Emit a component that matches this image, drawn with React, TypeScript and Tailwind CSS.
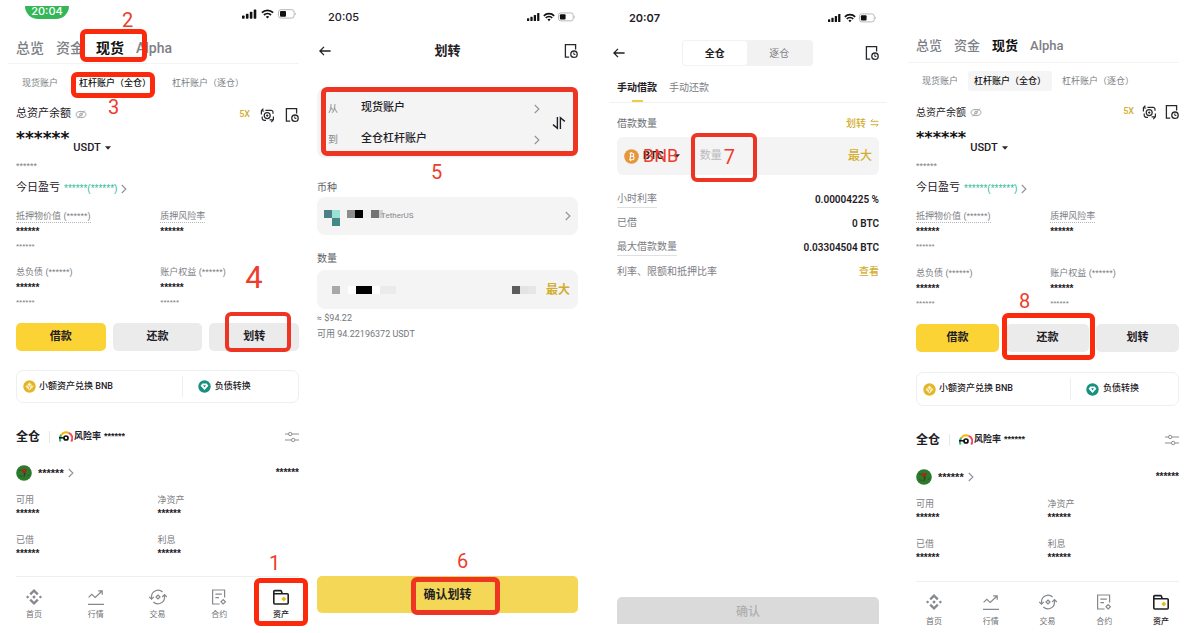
import React from "react";
import clsx from "clsx";

const INK = "text-[#1e2026]";
const MUTED = "text-[#7d8085]";
const STARS = "font-['Liberation_Sans',sans-serif]";
const RED = "border-[#ee3524]";
const BRIGHT_RED = "border-[#fb2a0c]";

type MarkProps = { box?: string; label: string; at: string; size?: string };

/* Red tutorial frame and step number laid over the control it points at. */
function Mark({ box, label, at, size = "text-[20px]" }: MarkProps) {
  return (
    <>
      {box && <span className={clsx("pointer-events-none absolute z-20 rounded-[6px]", box)} />}
      <span
        className={clsx(
          "pointer-events-none absolute z-20 font-normal leading-none text-[#ee3d2c]",
          size,
          at,
        )}
      >
        {label}
      </span>
    </>
  );
}

function StatusIcons({ compact }: { compact?: boolean }) {
  return (
    <div className={clsx("flex items-center", compact ? "gap-[3px]" : "gap-1")}>
      <svg className={compact ? "w-[13px]" : "w-[15px]"} height="10" viewBox="0 0 15 10" fill="#111">
        <rect x="0" y="6.5" width="2.6" height="3.2" rx="0.7" />
        <rect x="3.9" y="4.8" width="2.6" height="4.9" rx="0.7" />
        <rect x="7.8" y="2.7" width="2.6" height="7" rx="0.7" />
        <rect x="11.7" y="0.4" width="2.6" height="9.3" rx="0.7" />
      </svg>
      <svg className={compact ? "w-3" : "w-[13px]"} height="10" viewBox="0 0 13 10" fill="none" stroke="#111" strokeWidth="1.8">
        <path d="M0.9 3.7a8 8 0 0 1 11.2 0" />
        <path d="M3 6a5 5 0 0 1 7 0" />
        <path d="M6.5 9.6 4.8 7.8a2.5 2.5 0 0 1 3.4 0z" fill="#111" stroke="none" />
      </svg>
      <svg className={compact ? "w-[18px]" : "w-[19px]"} height="10" viewBox="0 0 19 10">
        <rect x="0.5" y="0.7" width="15.6" height="8.4" rx="2.4" fill="none" stroke="#b5b5b5" />
        <rect x="2" y="2.1" width="6" height="5.6" rx="1" fill="#111" />
        <path d="M17.2 3.5v2.8c1-.4 1-2.4 0-2.8z" fill="#b5b5b5" />
      </svg>
    </div>
  );
}

function Chevron({ className }: { className?: string }) {
  return (
    <svg width="6" height="10" viewBox="0 0 6 10" fill="none" stroke="#8f9296" strokeWidth="1.1" className={className}>
      <path d="M0.8 1 4.9 5 0.8 9" />
    </svg>
  );
}

function HistoryIcon() {
  return (
    <svg width="14" height="16" viewBox="0 0 14 16" fill="none" stroke="#26282c" strokeWidth="1.3">
      <path d="M5.2 14.2H1.4V1.6h10.2v5" />
      <circle cx="10" cy="11.2" r="3.2" />
      <path d="M9.8 9.4v2h1.6" strokeWidth="1" />
    </svg>
  );
}

function ConvertIcon() {
  return (
    <svg width="15" height="16" viewBox="0 0 15 16" fill="none" stroke="#26282c" strokeWidth="1.2">
      <circle cx="7.2" cy="8.6" r="3" />
      <path d="m7.2 7.2 1.4 1.4-1.4 1.4-1.4-1.4z" fill="#26282c" stroke="none" />
      <path d="M1.4 7.6V3.4M1.4 4h2.8M3.4 1.6 1.2 4M5.4 3.4h5.8a1.8 1.8 0 0 1 1.8 1.8v1.6" />
      <path d="M2.2 9.4v1.8a2.2 2.2 0 0 0 2.2 2.2H6M9.6 12.9h4M13.4 9.6v3.3M11.2 15.1l2.2-2.2" />
    </svg>
  );
}

function EyeOffIcon() {
  return (
    <svg width="12" height="9" viewBox="0 0 12 9" fill="none" stroke="#9b9da1" strokeWidth="0.9">
      <ellipse cx="6" cy="4.5" rx="4.9" ry="3.1" />
      <circle cx="6" cy="4.5" r="1.4" />
      <path d="M2.2 8.5 10 .6" />
    </svg>
  );
}

function Caret() {
  return (
    <svg width="6" height="4" viewBox="0 0 6 4" fill="#26282c">
      <path d="M0 0.3h6L3 3.8z" />
    </svg>
  );
}

function BackIcon() {
  return (
    <svg width="12" height="10" viewBox="0 0 12 10" fill="none" stroke="#1e2026" strokeWidth="1.3">
      <path d="M11.6 5H1M5 0.9 0.9 5 5 9.1" />
    </svg>
  );
}

function GaugeIcon() {
  return (
    <svg width="14" height="12" viewBox="0 0 14 12" fill="none" strokeWidth="2">
      <path d="M1.6 10.5A5.6 5.6 0 0 1 2.4 4" stroke="#2eb67d" />
      <path d="M2.4 4A5.6 5.6 0 0 1 9.6 1.9" stroke="#f5b800" />
      <path d="M9.6 1.9a5.6 5.6 0 0 1 2.6 8.6" stroke="#ef4a5f" />
      <path d="M0 6.8h5" stroke="#111" strokeWidth="1.5" />
      <circle cx="7" cy="7" r="2" stroke="#111" strokeWidth="1.7" />
    </svg>
  );
}

function SlidersIcon() {
  return (
    <svg width="14" height="12" viewBox="0 0 14 12" fill="none" stroke="#8b8e93">
      <path d="M0 3h3.4M7 3h7M0 9h6.4M10 9h4" />
      <circle cx="5.2" cy="3" r="1.7" />
      <circle cx="8.2" cy="9" r="1.7" />
    </svg>
  );
}

function SmallBalanceIcon() {
  return (
    <svg width="13" height="13" viewBox="0 0 13 13">
      <circle cx="6.5" cy="6.5" r="6.2" fill="#e3b62a" />
      <path d="m6.5 2.6 3.9 3.9-3.9 3.9-3.9-3.9z" fill="#fbeec2" />
      <path d="m4.3 5 2.2 2.1L8.7 5M6.5 7.1v2" stroke="#e3b62a" fill="none" strokeWidth="0.9" />
    </svg>
  );
}

function DebtIcon() {
  return (
    <svg width="13" height="13" viewBox="0 0 13 13">
      <circle cx="6.5" cy="6.5" r="6.2" fill="#17907f" />
      <path d="M4.4 3.6h4.2l1.8 2.1-3.9 4.2-3.9-4.2z" fill="#fff" />
      <path d="M5 5.2h3L6.5 7.6z" fill="#17907f" />
    </svg>
  );
}

function CoinIcon() {
  return (
    <svg width="16" height="16" viewBox="0 0 16 16">
      <circle cx="8" cy="8" r="7.8" fill="#2c7a2c" />
      <path d="M3 5.5c1.6-1 2 .8 3.4.2M3.4 10.5c1 .9 2.4.4 3 1.4M11.6 11c.8-1 1.6-.8 2-1.8" stroke="#1f5a20" fill="none" />
      <path d="M6 4.1c.8-.6 1.4.2 2 .2s1.6-.8 2.4 0c.6.8.2 1.8-.4 2.6-.6.9-1.2.8-2 .8s-1.8-.4-2.2-1.4c-.2-.8-.2-1.8.2-2.2z" fill="#a8281f" />
      <path d="M8.2 7.4c.4 1.6.2 3-.2 4.8M8.3 9.6l1.6-1" stroke="#4a3018" fill="none" />
    </svg>
  );
}

type NavName = "home" | "market" | "trade" | "futures" | "assets";

function NavIcon({ name }: { name: NavName }) {
  return (
    <svg width="18" height="18" viewBox="0 0 18 18" fill="none" stroke="#85888c" strokeWidth="1.2">
      {name === "home" && (
        <g fill="#85888c" stroke="none">
          <path d="m9 1 4.6 4.6-1.6 1.6-3-3-3 3-1.6-1.6zM9 17l4.6-4.6-1.6-1.6-3 3-3-3-1.6 1.6z" />
          <path d="m9 7.2 1.8 1.8L9 10.8 7.2 9zM2.6 7.4 4.2 9l-1.6 1.6L1 9zM15.4 7.4 17 9l-1.6 1.6L13.8 9z" />
        </g>
      )}
      {name === "market" && (
        <path d="M1 16.3h16M1.6 9.4l3.2-3 3.4 3 6.6-6.2M11.2 2.8h4v4" />
      )}
      {name === "trade" && (
        <>
          <path d="M2.5 11V8.6A6.6 6.6 0 0 1 13.6 4M15.5 7v2.4a6.6 6.6 0 0 1-11.1 4.6" />
          <path d="M0.2 8.8 2.5 11.2l2.3-2.4M13.2 9l2.3-2.4L17.8 9" />
          <path d="m9 7 2 2-2 2-2-2z" />
        </>
      )}
      {name === "futures" && (
        <>
          <path d="M9.6 16H2.6V2h12v7.4M5.4 6.2h6.4M5.4 9.6h3.6" />
          <path d="m13.2 11.6 2.2 2.2-2.2 2.2-2.2-2.2z" />
        </>
      )}
      {name === "assets" && (
        <>
          <path d="M1.8 5.8V3.6a1 1 0 0 1 1-1h5.6a1 1 0 0 1 1 .7l.8 2.5M1.8 5.8h13.4a1 1 0 0 1 1 1V15a1 1 0 0 1-1 1H2.8a1 1 0 0 1-1-1z" stroke="#1e2026" strokeWidth="1.6" />
          <path d="m11.8 8.4 2.5 2.5-2.5 2.5-2.5-2.5z" fill="#e3bd1c" stroke="none" />
        </>
      )}
    </svg>
  );
}

const NAV: { name: NavName; text: string }[] = [
  { name: "home", text: "首页" },
  { name: "market", text: "行情" },
  { name: "trade", text: "交易" },
  { name: "futures", text: "合约" },
  { name: "assets", text: "资产" },
];

function Stat({ label, mask, sub, underline }: { label: string; mask?: boolean; sub?: boolean; underline?: boolean }) {
  return (
    <div>
      <div className={clsx("flex h-4 items-center pt-0.5 text-[9px] leading-[12px]", MUTED)}>
        <span className={clsx(underline && "border-b border-dotted border-[#b5b7ba]")}>
          {label}
          {mask && <span className={STARS}> (******)</span>}
        </span>
      </div>
      <div className={clsx("h-4 pt-0.5 text-[10px] font-bold leading-[14px]", STARS, INK)}>******</div>
      <div className={clsx("h-3.5 pt-0.5 text-[8px] leading-[12px]", STARS, MUTED)}>{sub && "******"}</div>
    </div>
  );
}

function AssetStat({ label }: { label: string }) {
  return (
    <div>
      <div className={clsx("h-3.5 text-[9px] leading-[16px]", MUTED)}>{label}</div>
      <div className={clsx("h-3.5 pt-0.5 text-[10px] font-bold leading-[12px]", STARS, INK)}>******</div>
    </div>
  );
}

const FIRST = {
  shell: "pl-4 pr-px",
  tabs: "h-9 pt-1.5 text-[14px]",
  sub: "h-[38px] gap-[9px]",
  chip: "",
  total: "h-[23px] pt-0.5 text-[11px]",
  tools: "gap-2.5",
  balance: "text-[17px]",
  stats: "gap-y-2.5",
  card: "mt-[19px] h-[33px]",
  coin: "mt-3",
  nav: "mt-4",
  navItem: "gap-0.5",
};

const REPAY: typeof FIRST = {
  shell: "pl-4 pr-[21px]",
  tabs: "h-[35px] pt-0.5 text-[13px]",
  sub: "h-9 gap-1",
  chip: "bg-[#f5f5f5]",
  total: "h-[26px] text-[10px]",
  tools: "gap-2",
  balance: "text-[16px]",
  stats: "gap-y-[11px]",
  card: "mt-5 h-[34px]",
  coin: "mt-[13px]",
  nav: "mt-[17px]",
  navItem: "gap-1",
};

function Wallet({ first }: { first: boolean }) {
  const s = first ? FIRST : REPAY;
  return (
    <section className={clsx("flex min-w-0 flex-col", s.shell)}>
      <div className="flex h-7 items-center justify-between pl-[9px] pr-0.5">
        {first && (
          <>
            <span className="mt-1.5 flex h-[13px] w-11 items-center justify-center self-start rounded-b-full rounded-t-[4px] bg-[#34b759] pb-0.5 font-['Inter',sans-serif] text-[11px] font-medium leading-none text-white">
              20:04
            </span>
            <StatusIcons />
          </>
        )}
      </div>

      <div className={clsx("-ml-2 flex items-center gap-3 border-b border-[#f3f3f3] pl-2 font-medium text-[#7d8085]", s.tabs)}>
        <button type="button">总览</button>
        <button type="button">资金</button>
        <div className="relative flex">
          <button type="button" className="font-bold text-[#111]">现货</button>
          {first && (
            <Mark box={clsx("-left-4 -right-[23px] -top-[9px] -bottom-[3px] border-[5px]", BRIGHT_RED)} label="2" at="left-[26px] -top-7" />
          )}
        </div>
        <button type="button">Alpha</button>
      </div>

      <div className={clsx("flex items-center text-[9px] text-[#7d8085]", s.sub)}>
        <button type="button" className="h-5 whitespace-nowrap px-1.5 pt-0.5">现货账户</button>
        <div className="relative flex">
          <button type="button" className={clsx("h-5 whitespace-nowrap rounded-[3px] px-1.5 pt-0.5 font-medium text-[#111]", s.chip)}>
            杠杆账户（全仓）
          </button>
          {first && (
            <Mark box={clsx("-left-0.5 right-0.5 -top-px -bottom-[5px] border-[5px]", BRIGHT_RED)} label="3" at="left-[35px] top-6" />
          )}
        </div>
        <button type="button" className="h-5 whitespace-nowrap px-1.5 pt-0.5">杠杆账户（逐仓）</button>
      </div>

      <div className={clsx("flex items-center justify-between", s.total, INK)}>
        <div className="flex items-center gap-1">
          <span>总资产余额</span>
          <EyeOffIcon />
        </div>
        <div className={clsx("flex items-center", s.tools)}>
          <span className="text-[9px] font-medium text-[#d3ad2f]">5X</span>
          <button type="button" aria-label="兑换"><ConvertIcon /></button>
          <button type="button" aria-label="历史记录"><HistoryIcon /></button>
        </div>
      </div>

      <div className="flex h-[31px] items-start gap-1">
        <span className={clsx("pt-[3px] font-['DejaVu_Sans',sans-serif] font-bold leading-[20px] text-[#111]", s.balance)}>******</span>
        <button type="button" className={clsx("mt-4 flex items-center gap-1 text-[11px] font-medium leading-[14px]", INK)}>
          USDT <Caret />
        </button>
      </div>

      <div className={clsx("h-[18px] pt-1 text-[9px] leading-[12px]", STARS, MUTED)}>******</div>

      <div className={clsx("flex h-[27px] items-center gap-1 pt-0.5 text-[11px]", INK)}>
        <span>今日盈亏</span>
        <span className={clsx("text-[10px] leading-none text-[#2ebd9b]", STARS)}>******(******)</span>
        <Chevron />
      </div>

      <div className={clsx("mt-1.5 grid grid-cols-[51%_1fr]", s.stats)}>
        <Stat label="抵押物价值" mask sub underline />
        <Stat label="质押风险率" underline />
        <Stat label="总负债" mask sub />
        <Stat label="账户权益" mask sub />
      </div>

      <div className={clsx("mt-3.5 grid grid-cols-3 gap-[7px] text-[11px] font-bold", INK)}>
        <button type="button" className="h-7 rounded-[5px] bg-[#fcd335] pt-px">借款</button>
        <div className="relative grid">
          <button type="button" className="h-7 rounded-[5px] bg-[#ebebeb] pt-px">还款</button>
          {!first && (
            <Mark box={clsx("-left-1 -right-1.5 -top-[11px] -bottom-2 border-[5px]", BRIGHT_RED)} label="8" at="left-[13px] -top-[33px]" />
          )}
        </div>
        <div className="relative grid">
          <button type="button" className="h-7 rounded-[5px] bg-[#ebebeb] pt-px">划转</button>
          {first && (
            <Mark box={clsx("left-4 right-2 -top-[11px] -bottom-px border-[4px]", RED)} label="4" at="left-9 -top-[61px]" size="text-[31px]" />
          )}
        </div>
      </div>

      <div className={clsx("flex items-center rounded-[7px] border border-[#eeeff1] text-[9px] font-medium", INK, s.card)}>
        <button type="button" className="flex w-[59%] items-center gap-[3px] whitespace-nowrap border-r border-[#eeeff1] py-1 pl-1.5">
          <SmallBalanceIcon /> 小额资产兑换 BNB
        </button>
        <button type="button" className="flex items-center gap-1 whitespace-nowrap pl-[15px]">
          <DebtIcon /> 负债转换
        </button>
      </div>

      <div className={clsx("mt-[22px] flex h-6 items-center", INK)}>
        <h2 className="text-[12px] font-bold">全仓</h2>
        <span className="mx-[9px] h-3 w-px bg-[#e6e7e9]" />
        <GaugeIcon />
        <span className="ml-px text-[9px] font-bold">风险率</span>
        <span className={clsx("ml-[3px] text-[9px] font-bold", STARS)}>******</span>
        <button type="button" aria-label="筛选" className="ml-auto"><SlidersIcon /></button>
      </div>

      <div className={clsx("flex h-6 items-center", s.coin, INK)}>
        <CoinIcon />
        <span className={clsx("ml-1.5 text-[11px] font-bold leading-none", STARS)}>******</span>
        <Chevron className="ml-1" />
        <span className={clsx("ml-auto text-[10px] font-bold leading-none", STARS)}>******</span>
      </div>

      <div className="mt-[7px] grid grid-cols-2 gap-y-3">
        <AssetStat label="可用" />
        <AssetStat label="净资产" />
        <AssetStat label="已借" />
        <AssetStat label="利息" />
      </div>

      <nav className={clsx("flex justify-between border-t border-[#eeeff0] px-2.5 pt-[11px]", s.nav)}>
        {NAV.map((item) => (
          <a
            key={item.name}
            href={"#" + item.name}
            className={clsx(
              "relative flex w-4 flex-col items-center whitespace-nowrap text-[8px] leading-[14px]",
              s.navItem,
              item.name === "assets" ? "font-medium text-[#1e2026]" : "text-[#6f7276]",
            )}
          >
            <span className="flex w-[18px]"><NavIcon name={item.name} /></span>
            {item.text}
            {first && item.name === "assets" && (
              <Mark box={clsx("-left-[19px] -right-[19px] -top-2.5 -bottom-1 border-[5px]", BRIGHT_RED)} label="1" at="-left-1 -top-[35px]" />
            )}
          </a>
        ))}
      </nav>
    </section>
  );
}

function Mosaic({ cells }: { cells: string[] }) {
  return (
    <span className="flex">
      {cells.map((c, i) => (
        <span key={i} className={clsx("h-2 w-2", c)} />
      ))}
    </span>
  );
}

function Transfer() {
  return (
    <section className="flex min-w-0 flex-col pb-5 pl-[17px] pr-[22px] text-[#1e2026]">
      <div className="flex h-[34px] items-center justify-between pl-[11px] pr-0.5">
        <span className="font-['Inter',sans-serif] text-[11px] font-medium">20:05</span>
        <StatusIcons compact />
      </div>
      <header className="flex h-[34px] items-center justify-between pl-0.5">
        <button type="button" aria-label="返回"><BackIcon /></button>
        <h1 className="text-[13px] font-bold">划转</h1>
        <button type="button" aria-label="历史记录"><HistoryIcon /></button>
      </header>

      <div className="relative mt-5 flex items-center rounded-[8px] bg-[#f4f4f4] pl-[11px] pr-3">
        <div className="flex-1 py-1">
          {[
            ["从", "现货账户"],
            ["到", "全仓杠杆账户"],
          ].map(([side, account]) => (
            <button key={side} type="button" className="flex h-[31px] w-full items-center pt-0.5 text-left">
              <span className="w-[33px] text-[10px] text-[#85888c]">{side}</span>
              <span className="text-[11px] font-medium">{account}</span>
              <Chevron className="ml-auto" />
            </button>
          ))}
        </div>
        <button type="button" aria-label="互换" className="ml-3">
          <svg width="14" height="14" viewBox="0 0 14 14" fill="none" stroke="#1e2026" strokeWidth="1.4">
            <path d="M5.4 1v11.2L1 8.6M8.4 13V1.8L12.8 5.4" />
          </svg>
        </button>
        <Mark box={clsx("left-1 right-0 -top-px bottom-0.5 border-[5px]", RED)} label="5" at="left-[114px] top-[74px]" />
      </div>

      <h2 className="mt-[22px] text-[10px] leading-[16px] text-[#5c5f64]">币种</h2>
      <button type="button" aria-label="选择币种" className="mt-px flex h-[38px] items-center rounded-[8px] bg-[#f4f4f4] px-[7px] text-left">
        <span className="mt-[3px] flex flex-col">
          <Mosaic cells={["bg-[#4d7f87]", "bg-[#9ce0d8]"]} />
          <Mosaic cells={["bg-[#f4f4f4]", "bg-[#458986]"]} />
        </span>
        <span className="mb-1 ml-[7px] flex items-center">
          <Mosaic cells={["bg-[#8d8d8d]", "bg-[#000000]", "bg-[#efefef]", "bg-[#737373]"]} />
          <span className="h-2 w-1 bg-[#d0d0d0]" />
        </span>
        <span className="-ml-0.5 text-[8px] text-[#85888c]">TetherUS</span>
        <Chevron className="ml-auto" />
      </button>

      <h2 className="mt-4 text-[10px] leading-[16px] text-[#5c5f64]">数量</h2>
      <div className="mt-[3px] flex h-[39px] items-center rounded-[8px] bg-[#f4f4f4] pl-[15px] pr-2">
        <Mosaic cells={["bg-[#a8a8a8]", "bg-[#f4f4f4]", "bg-[#ffffff]", "bg-[#000000]", "bg-[#000000]", "bg-[#ffffff]", "bg-[#ebebeb]", "bg-[#ebebeb]"]} />
        <span className="ml-auto mr-2.5"><Mosaic cells={["bg-[#5c5c5c]", "bg-[#e3e3e3]", "bg-[#e6e6e6]"]} /></span>
        <button type="button" className="text-[12px] font-bold text-[#d3ad2f]">最大</button>
      </div>
      <p className="mt-px text-[9px] leading-[16px] text-[#74777c]">≈ $94.22</p>
      <p className="text-[9px] leading-[16px] text-[#74777c]">可用 94.22196372 USDT</p>

      <div className="relative mt-auto grid">
        <button type="button" className="h-[37px] rounded-[5px] bg-[#f4d756] text-[12px] font-bold text-[#1e2026]">确认划转</button>
        <Mark box={clsx("left-[36%] right-[30%] top-px -bottom-0.5 border-[5px]", RED)} label="6" at="left-[140px] -top-[25px]" />
      </div>
    </section>
  );
}

function Borrow() {
  return (
    <section className="flex min-w-0 flex-col pb-[9px] pl-[17px] pr-[21px] text-[#1e2026]">
      <div className="flex h-9 items-center justify-between pl-3 pr-0.5">
        <span className="font-['Inter',sans-serif] text-[11px] font-semibold">20:07</span>
        <StatusIcons compact />
      </div>
      <header className="-ml-1 flex h-[34px] items-center justify-between">
        <button type="button" aria-label="返回"><BackIcon /></button>
        <div className="ml-1 grid h-[26px] w-[131px] grid-cols-2 rounded-[4px] bg-[#f2f2f2] p-px text-[10px]">
          <button type="button" className="rounded-[3px] bg-white font-bold">全仓</button>
          <button type="button" className="text-[#7d8085]">逐仓</button>
        </div>
        <button type="button" aria-label="历史记录"><HistoryIcon /></button>
      </header>

      <div className="-mx-2 flex h-[33px] items-end gap-3 border-b border-[#f1f1f1] px-2 text-[10px]">
        <button type="button" className="flex flex-col items-center gap-1 font-bold leading-[16px]">
          手动借款
          <span className="h-0.5 w-[11px] bg-[#f0cf3c]" />
        </button>
        <button type="button" className="mb-1.5 leading-[16px] text-[#7d8085]">手动还款</button>
      </div>

      <div className="mt-2.5 flex h-5 items-center justify-between text-[10px]">
        <label htmlFor="borrow-amount" className="text-[#6c6f74]">借款数量</label>
        <button type="button" className="flex items-center gap-1 font-medium text-[#d3ad2f]">
          划转
          <svg width="9" height="8" viewBox="0 0 9 8" fill="none" stroke="#d3ad2f">
            <path d="M8.4 2.3H.8L2.8.4M.6 5.7h7.6l-2 1.9" />
          </svg>
        </button>
      </div>

      <div className="mt-1 flex h-[38px] items-center rounded-[6px] bg-[#f4f4f4] px-[7px]">
        <button type="button" className="flex items-center text-[11px] font-bold">
          <svg width="15" height="15" viewBox="0 0 15 15">
            <circle cx="7.5" cy="7.5" r="7.3" fill="#e8963a" />
            <path d="M5.6 4.2h2.6c2.2 0 2 2.8.2 3.1 2.4.1 2.2 3.5-.2 3.5H5.2M6.7 4.2 6 10.8M6.2 7.3h2.2M7.2 2.9v1.2M6.6 10.8V12" fill="none" stroke="#fff" strokeWidth="1.1" />
          </svg>
          <span className="relative ml-1 mr-2.5">
            BTC
            <Mark label="BNB" at="left-0 -top-px" size="text-[18px]" />
          </span>
          <Caret />
        </button>
        <div className="relative ml-5 flex min-w-0 flex-1 items-center">
          <input id="borrow-amount" type="text" placeholder="数量" className="w-full bg-transparent text-[11px] text-[#1e2026] outline-none placeholder:text-[#b9bbbe]" />
          <Mark box={clsx("-left-[9px] -top-[15px] h-[49px] w-[66px] border-[4px]", RED)} label="7" at="left-6 -top-px" />
        </div>
        <button type="button" className="whitespace-nowrap text-[12px] font-medium text-[#d3ad2f]">最大</button>
      </div>

      <dl className="mt-3 text-[10px]">
        {[
          ["小时利率", "0.00004225 %", true],
          ["已借", "0 BTC", false],
          ["最大借款数量", "0.03304504 BTC", true],
        ].map(([name, value, line]) => (
          <div key={String(name)} className="flex h-6 items-center justify-between">
            <dt className={clsx("leading-[16px] text-[#7d8085]", line && "border-b border-[#dfe0e2]")}>{name}</dt>
            <dd className="font-semibold">{value}</dd>
          </div>
        ))}
        <div className="flex h-6 items-center justify-between">
          <dt className="text-[#7d8085]">利率、限额和抵押比率</dt>
          <dd><a href="#rates" className="font-medium text-[#d3ad2f]">查看</a></dd>
        </div>
      </dl>

      <button type="button" disabled className="mt-auto h-[27px] rounded-t-[5px] bg-[#dadada] pt-0.5 text-[12px] font-medium text-[#aeaeae]">
        确认
      </button>
    </section>
  );
}

export default function App() {
  return (
    <main className="grid min-h-screen grid-cols-4 overflow-hidden bg-white font-['Roboto','Noto_Sans_CJK_SC',sans-serif]">
      <Wallet first />
      <Transfer />
      <Borrow />
      <Wallet first={false} />
    </main>
  );
}
